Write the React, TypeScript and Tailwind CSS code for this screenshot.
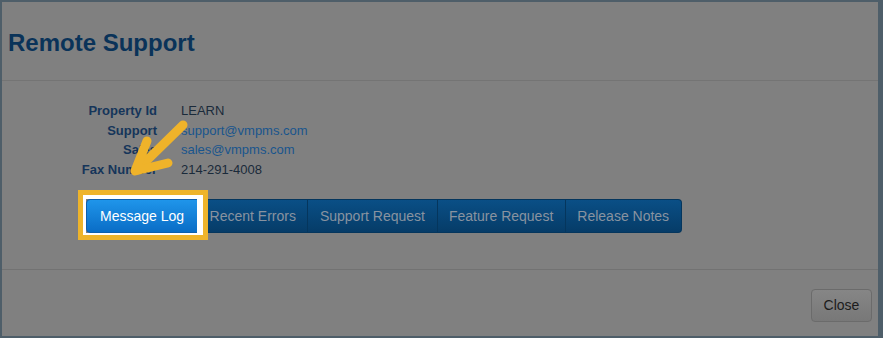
const info = [
  { label: "Property Id", value: "LEARN" },
  { label: "Support", value: "support@vmpms.com", link: true },
  { label: "Sales", value: "sales@vmpms.com", link: true },
  { label: "Fax Number", value: "214-291-4008" },
];

const tabs = ["Recent Errors", "Support Request", "Feature Request", "Release Notes"];

const App = () => {
  return (
    <div
      className="relative flex h-[338px] w-[883px] flex-col border-b-2 border-l-2 border-r-[5px] border-t-2 border-[#4e5e69] bg-[#808080] text-[13px]"
      style={{ fontFamily: '"Liberation Sans", Arial, sans-serif' }}
    >
      <div className="border-b border-[#747474] pb-[23px] pl-[6px] pt-[27px]">
        <h1 className="text-[24px] font-bold leading-[28px] text-[#0a3359]">Remote Support</h1>
      </div>

      <div className="flex-1 pl-[6px] pt-[20px]">
        <div className="grid grid-cols-[149px_1fr] gap-x-6 leading-[19.5px]">
          {info.map((row) => (
            <div key={row.label} className="contents">
              <div className="text-right font-bold text-[#15355a]">{row.label}</div>
              <div className={row.link ? "text-[#19558d]" : "text-[#1a2a3a]"}>{row.value}</div>
            </div>
          ))}
        </div>

        <div className="relative ml-[78px] mt-[20px] inline-flex text-[14px] leading-[20px]">
          <button className="rounded-l-[4px] border border-[#0d5fae] bg-gradient-to-b from-[#1f95ea] to-[#0a6dc6] px-[13px] py-[6px] text-white">
            Message Log
          </button>
          {tabs.map((t, i) => (
            <button
              key={t}
              className={`border-y border-r border-[#05365d] bg-gradient-to-b from-[#0a4f86] to-[#063c68] px-[11.5px] py-[6px] text-[#8893a0] ${
                i === tabs.length - 1 ? "rounded-r-[4px]" : ""
              }`}
            >
              {t}
            </button>
          ))}
          <div className="absolute left-[-8px] top-[-9px] z-10 h-[50px] w-[130px] border-[5px] border-[#eeb42b]">
            <div className="h-full w-full border-b-2 border-l-[3px] border-r-[6px] border-t-4 border-white" />
          </div>
        </div>
      </div>

      <div className="flex h-[67px] justify-end border-t border-[#727272] pr-[6px] pt-[19px]">
        <button className="h-[33px] w-[61px] rounded-[4px] border border-[#6b6b6b] bg-gradient-to-b from-[#868686] to-[#787878] text-[14px] text-[#1c1c1c]">
          Close
        </button>
      </div>

      <svg
        className="pointer-events-none absolute left-[-2px] top-[-2px]"
        width="883"
        height="338"
        viewBox="0 0 883 338"
      >
        <g stroke="#efb32a" strokeWidth="9" strokeLinecap="round" strokeLinejoin="round" fill="none">
          <line x1="183" y1="125" x2="137" y2="170" />
          <polyline points="147,141 135,171 168,163" />
        </g>
      </svg>
    </div>
  );
};

export default App;
